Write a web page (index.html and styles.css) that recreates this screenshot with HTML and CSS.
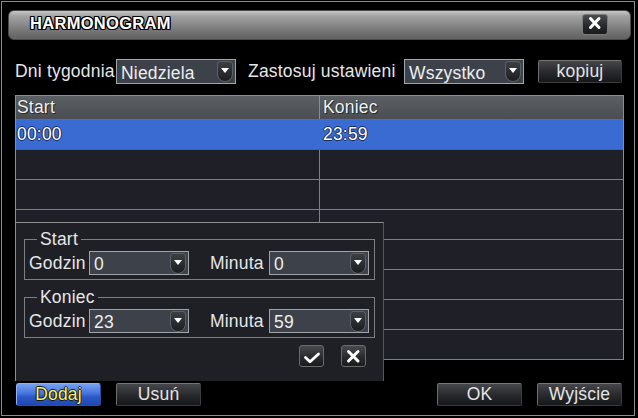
FILE: index.html
```html
<!DOCTYPE html>
<html lang="pl">
<head>
<meta charset="utf-8">
<title>HARMONOGRAM</title>
<link rel="stylesheet" href="styles.css">
</head>
<body>
<div class="dialog">
  <div class="titlebar">
    <span class="title">HARMONOGRAM</span>
    <button class="close" aria-label="Zamknij">
      <svg width="24" height="19" viewBox="1 1 24 19"><path d="M8.5 4.5 L17 13.5 M17 4.5 L8.5 13.5" stroke="#fff" stroke-width="3" fill="none" stroke-linecap="round"/></svg>
    </button>
  </div>

  <div class="toolbar">
    <span class="lbl lbl-day">Dni tygodnia</span>
    <div class="select sel-wide"><span class="val">Niedziela</span><span class="arrow"><svg width="8" height="5" viewBox="0 0 8 5"><path d="M0 0H8L4 5Z" fill="#fff"/></svg></span></div>
    <span class="lbl lbl-apply">Zastosuj ustawieni</span>
    <div class="select sel-wide"><span class="val">Wszystko</span><span class="arrow"><svg width="8" height="5" viewBox="0 0 8 5"><path d="M0 0H8L4 5Z" fill="#fff"/></svg></span></div>
    <button class="btn btn-copy">kopiuj</button>
  </div>

  <div class="table">
    <div class="row head"><div class="cell">Start</div><div class="cell">Koniec</div></div>
    <div class="row selected"><div class="cell">00:00</div><div class="cell">23:59</div></div>
    <div class="row"><div class="cell"></div><div class="cell"></div></div>
    <div class="row"><div class="cell"></div><div class="cell"></div></div>
    <div class="row"><div class="cell"></div><div class="cell"></div></div>
    <div class="row"><div class="cell"></div><div class="cell"></div></div>
    <div class="row"><div class="cell"></div><div class="cell"></div></div>
    <div class="row"><div class="cell"></div><div class="cell"></div></div>
    <div class="row"><div class="cell"></div><div class="cell"></div></div>
  </div>

  <div class="actions">
    <button class="btn btn-add">Dodaj</button>
    <button class="btn btn-del">Usuń</button>
    <button class="btn btn-ok">OK</button>
    <button class="btn btn-exit">Wyjście</button>
  </div>

  <div class="popup">
    <fieldset class="group">
      <legend>Start</legend>
      <div class="grow">
        <span class="glbl glbl-h">Godzin</span>
        <div class="select sel-small"><span class="val">0</span><span class="arrow"><svg width="8" height="5" viewBox="0 0 8 5"><path d="M0 0H8L4 5Z" fill="#fff"/></svg></span></div>
        <span class="glbl glbl-m">Minuta</span>
        <div class="select sel-small"><span class="val">0</span><span class="arrow"><svg width="8" height="5" viewBox="0 0 8 5"><path d="M0 0H8L4 5Z" fill="#fff"/></svg></span></div>
      </div>
    </fieldset>
    <fieldset class="group group-end">
      <legend>Koniec</legend>
      <div class="grow">
        <span class="glbl glbl-h">Godzin</span>
        <div class="select sel-small"><span class="val">23</span><span class="arrow"><svg width="8" height="5" viewBox="0 0 8 5"><path d="M0 0H8L4 5Z" fill="#fff"/></svg></span></div>
        <span class="glbl glbl-m">Minuta</span>
        <div class="select sel-small"><span class="val">59</span><span class="arrow"><svg width="8" height="5" viewBox="0 0 8 5"><path d="M0 0H8L4 5Z" fill="#fff"/></svg></span></div>
      </div>
    </fieldset>
    <div class="popup-btns">
      <button class="ibtn" aria-label="OK">
        <svg width="23" height="20" viewBox="1 1 23 20"><path d="M6.5 12.5 L11 16.8 L19.5 9" stroke="#fff" stroke-width="2.8" fill="none" stroke-linecap="round" stroke-linejoin="round"/></svg>
      </button>
      <button class="ibtn" aria-label="Anuluj">
        <svg width="23" height="20" viewBox="1 1 23 20"><path d="M7.5 6.5 L17 16 M17 6.5 L7.5 16" stroke="#fff" stroke-width="3" fill="none" stroke-linecap="round"/></svg>
      </button>
    </div>
  </div>
</div>
</body>
</html>
```
FILE: styles.css
```css
html, body {
  margin: 0;
  padding: 0;
}
body {
  width: 638px;
  height: 418px;
  overflow: hidden;
  background: #000;
  font-family: "Liberation Sans", Arial, sans-serif;
  font-size: 17.5px;
  letter-spacing: 0.2px;
  color: #e6e6e6;
}
button {
  font-family: inherit;
  font-size: inherit;
  letter-spacing: inherit;
  padding: 0;
  margin: 0;
  cursor: default;
}

.dialog {
  position: relative;
  box-sizing: border-box;
  width: 634px;
  height: 415px;
  margin: 1px 0 0 1px;
  border: 1px solid #8c8c8c;
  background: #000;
}

/* title bar */
.titlebar {
  box-sizing: border-box;
  height: 30px;
  margin: 8px 3px 0 6px;
  padding: 2px 0 0 21px;
  display: flex;
  align-items: flex-start;
  border: 1px solid #4a4a4a;
  border-radius: 6px;
  background: linear-gradient(to bottom, #c8c8c8 0%, #a2a2a2 18%, #8c8c8c 45%, #767676 70%, #626262 100%);
}
.title {
  font-size: 16.5px;
  font-weight: bold;
  letter-spacing: 0.3px;
  line-height: 20px;
  color: #fff;
  text-shadow: 1px 0 0 #000, -1px 0 0 #000, 0 1px 0 #000, 0 -1px 0 #000, 1px 1px 0 #000, -1px -1px 0 #000, 1px -1px 0 #000, -1px 1px 0 #000;
}
.close {
  box-sizing: border-box;
  width: 26px;
  height: 21px;
  margin: 1px 22px 0 auto;
  border: 1px solid #7a7a7a;
  border-radius: 3px;
  background: linear-gradient(#4a4c51, #25262a 60%, #1a1b1e);
  display: flex;
}

/* toolbar */
.toolbar {
  display: flex;
  align-items: center;
  height: 25px;
  margin: 19px 0 0 13px;
}
.lbl {
  flex: none;
  white-space: nowrap;
}
.lbl-day { width: 101px; }
.lbl-apply { width: 156px; margin-left: 12px; }

.select {
  flex: none;
  box-sizing: border-box;
  display: flex;
  align-items: center;
  border: 1px solid #a0a5ab;
  background: #3d424a;
  padding: 0 2px 0 4px;
  color: #eceef0;
}
.sel-wide { width: 120px; height: 25px; }
.sel-small { width: 100px; height: 24px; }
.val {
  line-height: 20px;
  padding-top: 2px;
}
.arrow {
  flex: none;
  box-sizing: border-box;
  width: 16px;
  height: 21px;
  margin-left: auto;
  padding-top: 6px;
  display: flex;
  justify-content: center;
  align-items: flex-start;
  border: 1px solid #5c6066;
  border-radius: 3px 3px 8px 8px;
  background: linear-gradient(#3c3f44, #1c1d20);
}

.btn {
  flex: none;
  box-sizing: border-box;
  width: 85px;
  height: 23px;
  line-height: 21px;
  border: 1px solid;
  border-color: #767676 #3c3c3c #3c3c3c #6e6e6e;
  border-radius: 2px;
  background: linear-gradient(#45474b, #2a2b2e 50%, #161719);
  color: #e4e4e4;
  text-align: center;
}
.btn-copy { margin-left: 14px; width: 84px; }

/* table */
.table {
  box-sizing: border-box;
  width: 609px;
  margin: 11px 0 0 13px;
  border: 1px solid #8e8e8e;
  border-bottom: none;
  background: #1f2027;
}
.row {
  display: flex;
  height: 30px;
  box-sizing: border-box;
  border-bottom: 1px solid #7e7e80;
}
.cell {
  width: 303px;
  box-sizing: border-box;
  padding-left: 1px;
  line-height: 29px;
}
.cell + .cell {
  width: 304px;
  border-left: 1px solid #7e7e80;
  padding-left: 3px;
}
.head {
  height: 24px;
  background: linear-gradient(#5b6065, #4a4e53);
  border-bottom: 1px solid #6a6d72;
}
.head .cell {
  line-height: 23px;
  color: #f2f2f2;
  text-shadow: 0 0 1px #202020, 1px 1px 0 #2a2a2a;
}
.head .cell + .cell { border-left-color: #8a8e92; }
.selected {
  background: #3a6bd2;
  border-bottom-color: #56607a;
}
.selected .cell {
  color: #fff;
  text-shadow: 1px 0 0 #1b2a55, -1px 0 0 #1b2a55, 0 1px 0 #1b2a55, 0 -1px 0 #1b2a55;
}
.selected .cell + .cell { border-left-color: #3a6bd2; }

/* bottom actions */
.actions {
  display: flex;
  margin: 23px 12px 0 14px;
}
.btn-del { margin-left: 15px; }
.btn-ok { margin-left: auto; }
.btn-exit { margin-left: 15px; }
.btn-add {
  border-color: #8fb0f2 #2a4ea8 #2a4ea8 #8fb0f2;
  border-radius: 3px;
  background: linear-gradient(#76a0f0, #4674dc 45%, #2c5ac8 60%, #1f48b2);
  color: #f4f07a;
  text-shadow: 1px 0 0 #1a1a10, -1px 0 0 #1a1a10, 0 1px 0 #1a1a10, 0 -1px 0 #1a1a10;
}

/* popup editor (overlays the table) */
.popup {
  position: absolute;
  left: 13px;
  top: 220px;
  box-sizing: border-box;
  width: 369px;
  height: 159px;
  padding: 7px 8px 0 8px;
  border-top: 1px solid #8c8c8c;
  border-left: 1px solid #8c8c8c;
  border-right: 1px solid #56585d;
  background: #1f2026;
}
.group {
  box-sizing: border-box;
  width: 351px;
  margin: 0;
  padding: 3px 4px 4px 4px;
  border: 1px solid #7c7e82;
  min-width: 0;
}
.group legend {
  margin-left: 8px;
  padding: 0 3px;
  line-height: 18px;
}
.group-end { margin-top: 8px; }
.grow {
  display: flex;
  align-items: center;
}
.glbl { flex: none; }
.glbl-h { width: 60px; }
.glbl-m { width: 59px; margin-left: 21px; }

.popup-btns {
  display: flex;
  justify-content: flex-end;
  gap: 17px;
  margin-top: 7px;
  padding-right: 9px;
}
.ibtn {
  box-sizing: border-box;
  width: 25px;
  height: 22px;
  display: flex;
  border: 1px solid #6a6a6a;
  border-radius: 3px;
  background: linear-gradient(#48494d, #2a2b2e 55%, #1a1b1d);
}
```
